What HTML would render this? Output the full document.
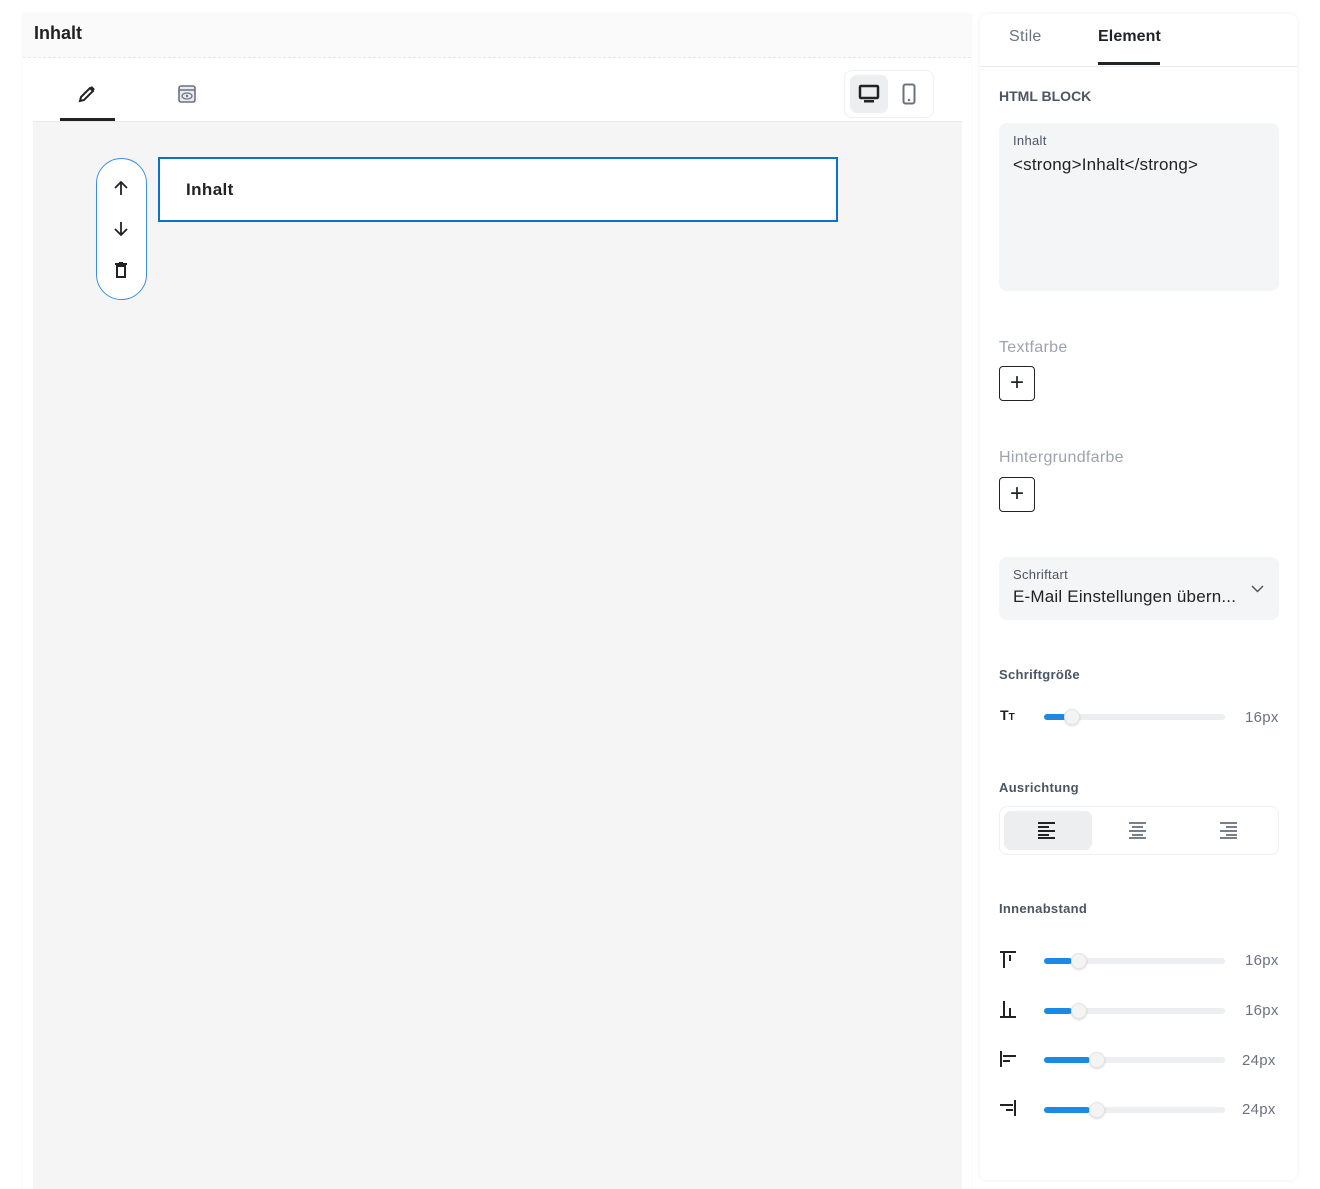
<!DOCTYPE html>
<html><head><meta charset="utf-8"><style>
*{box-sizing:border-box;margin:0;padding:0}
body{width:1320px;height:1189px;background:#fff;font-family:"Liberation Sans",sans-serif;position:relative;overflow:hidden;color:#1f2328}
.a{position:absolute}
.lbl{color:#4b5563;font-size:13px;font-weight:bold;letter-spacing:.3px}
.val{color:#6b7280;font-size:15px;letter-spacing:.3px}
.track{position:absolute;left:1044px;width:181px;height:6px;border-radius:3px;background:#eceef1}
.fill{position:absolute;left:0;top:0;height:6px;border-radius:3px;background:#1a8ae6}
.knob{position:absolute;top:-5px;width:16px;height:16px;border-radius:50%;background:#f4f4f4;border:1px solid #e3e3e3;box-shadow:0 1px 2px rgba(0,0,0,.15)}
.plus{position:absolute;left:999px;width:36px;height:35px;border:1.5px solid #222;border-radius:4px;font-size:24px;line-height:31px;text-align:center;font-weight:300}
</style></head><body>
<div class="a" style="left:23px;top:14px;width:948px;height:1175px;background:#fff;box-shadow:0 0 3px rgba(0,0,0,.06)"></div>
<div class="a" style="left:23px;top:14px;width:948px;height:44px;background:#fafafa;border-bottom:1px dashed #e5e5e5"></div>
<div class="a" style="left:34px;top:23px;font-size:18px;font-weight:bold;color:#222">Inhalt</div>
<svg class="a" style="left:77px;top:84px" width="20" height="20" viewBox="0 0 20 20"><path d="M3 17l1-4L13 4l3 3-9 9z" fill="none" stroke="#222" stroke-width="2"/><path d="M14 3l3 3" stroke="#222" stroke-width="2.5"/></svg>
<div class="a" style="left:60px;top:118px;width:55px;height:3px;background:#222"></div>
<svg class="a" style="left:178px;top:85px" width="18" height="18" viewBox="0 0 18 18"><rect x="1" y="1" width="16" height="16" rx="2" fill="#e8ecef" stroke="#6b7280" stroke-width="1.6"/><line x1="1" y1="5" x2="17" y2="5" stroke="#6b7280" stroke-width="1.5"/><ellipse cx="9" cy="11" rx="5" ry="3" fill="none" stroke="#6b7280" stroke-width="1.3"/><circle cx="9" cy="11" r="1.2" fill="#6b7280"/></svg>
<div class="a" style="left:844px;top:70px;width:90px;height:48px;border:1px solid #f0f0f0;border-radius:8px"></div>
<div class="a" style="left:850px;top:75px;width:38px;height:38px;border-radius:7px;background:#eceef0"></div>
<svg class="a" style="left:858px;top:84px" width="22" height="20" viewBox="0 0 22 20"><rect x="2" y="2" width="18" height="12" rx="1" fill="none" stroke="#222" stroke-width="2.5"/><rect x="6" y="16" width="10" height="2.5" fill="#222"/></svg>
<svg class="a" style="left:902px;top:83px" width="14" height="22" viewBox="0 0 14 22"><rect x="1.5" y="1.5" width="11" height="19" rx="2" fill="none" stroke="#6b7280" stroke-width="2"/><circle cx="7" cy="17" r="1.2" fill="#6b7280"/></svg>
<div class="a" style="left:33px;top:121px;width:929px;height:1px;background:#e8e8e8"></div>
<div class="a" style="left:33px;top:122px;width:929px;height:1067px;background:#f5f5f5"></div>
<div class="a" style="left:96px;top:158px;width:51px;height:142px;border:1.5px solid #3d8fe6;border-radius:26px;background:#fff"></div>
<svg class="a" style="left:112px;top:179px" width="18" height="18" viewBox="0 0 18 18"><path d="M9 16V3M3 9l6-6 6 6" fill="none" stroke="#222" stroke-width="1.8"/></svg>
<svg class="a" style="left:112px;top:220px" width="18" height="18" viewBox="0 0 18 18"><path d="M9 2v13M3 9l6 6 6-6" fill="none" stroke="#222" stroke-width="1.8"/></svg>
<svg class="a" style="left:113px;top:261px" width="16" height="18" viewBox="0 0 16 18"><path d="M2 3h12M6 2h4" stroke="#222" stroke-width="2"/><rect x="4" y="5" width="8" height="11" fill="none" stroke="#222" stroke-width="2"/></svg>
<div class="a" style="left:158px;top:157px;width:680px;height:65px;border:2px solid #0a72c9;background:#fff"></div>
<div class="a" style="left:186px;top:180px;font-size:17px;font-weight:bold;color:#222;letter-spacing:.4px">Inhalt</div>
<div class="a" style="left:980px;top:14px;width:317px;height:1166px;background:#fff;border-radius:8px;box-shadow:0 0 6px rgba(0,0,0,.07)"></div>
<div class="a" style="left:980px;top:66px;width:317px;height:1px;background:#e8eaec"></div>
<div class="a" style="left:1009px;top:28px;font-size:16px;color:#6b7280;letter-spacing:.3px">Stile</div>
<div class="a" style="left:1098px;top:28px;font-size:16px;font-weight:bold;color:#1f2328;letter-spacing:.1px">Element</div>
<div class="a" style="left:1098px;top:62px;width:62px;height:3px;background:#1f2328"></div>
<div class="a lbl" style="left:999px;top:88px;font-size:14px;letter-spacing:0">HTML BLOCK</div>
<div class="a" style="left:999px;top:123px;width:280px;height:168px;background:#f4f5f7;border-radius:8px"></div>
<div class="a" style="left:1013px;top:133px;font-size:13px;color:#4b5563;letter-spacing:.3px">Inhalt</div>
<div class="a" style="left:1013px;top:155px;font-size:17px;color:#222;letter-spacing:.2px">&lt;strong&gt;Inhalt&lt;/strong&gt;</div>
<div class="a" style="left:999px;top:339px;font-size:16px;color:#9ca3af;letter-spacing:.3px">Textfarbe</div>
<div class="plus" style="top:366px">+</div>
<div class="a" style="left:999px;top:449px;font-size:16px;color:#9ca3af;letter-spacing:.3px">Hintergrundfarbe</div>
<div class="plus" style="top:477px">+</div>
<div class="a" style="left:999px;top:557px;width:280px;height:63px;background:#f4f5f7;border-radius:8px"></div>
<div class="a" style="left:1013px;top:567px;font-size:13px;color:#4b5563;letter-spacing:.3px">Schriftart</div>
<div class="a" style="left:1013px;top:587px;font-size:17px;color:#222;letter-spacing:.2px">E-Mail Einstellungen übern...</div>
<svg class="a" style="left:1251px;top:585px" width="13" height="8" viewBox="0 0 13 8"><path d="M1 1l5.5 5.5L12 1" fill="none" stroke="#555" stroke-width="1.5"/></svg>
<div class="a lbl" style="left:999px;top:667px">Schriftgröße</div>
<div class="a" style="left:1000px;top:707px;font-size:14px;font-weight:bold">T<span style="font-size:10px">T</span></div>
<div class="track" style="top:714px"><div class="fill" style="width:22px"></div><div class="knob" style="left:20px"></div></div>
<div class="a val" style="left:1245px;top:709px">16px</div>
<div class="a lbl" style="left:999px;top:780px">Ausrichtung</div>
<div class="a" style="left:999px;top:806px;width:280px;height:49px;border:1px solid #f0f0f0;border-radius:8px"></div>
<div class="a" style="left:1004px;top:811px;width:88px;height:39px;background:#eceef0;border-radius:7px"></div>
<svg class="a" style="left:1038px;top:821px" width="18" height="18" viewBox="0 0 18 18" stroke="#222" stroke-width="2"><path d="M0 2h17M0 6h11M0 10h17M0 14h11M0 17h17"/></svg>
<svg class="a" style="left:1129px;top:821px" width="18" height="18" viewBox="0 0 18 18" stroke="#4b5563" stroke-width="1.6"><path d="M0 2h17M3 6h11M0 10h17M3 14h11M0 17h17"/></svg>
<svg class="a" style="left:1220px;top:821px" width="18" height="18" viewBox="0 0 18 18" stroke="#4b5563" stroke-width="1.6"><path d="M0 2h17M6 6h11M0 10h17M6 14h11M0 17h17"/></svg>
<div class="a lbl" style="left:999px;top:901px">Innenabstand</div>
<svg class="a" style="left:1000px;top:951px" width="16" height="18" viewBox="0 0 16 18" stroke="#222" stroke-width="2"><path d="M0 1h16M4 1v16M10 4v6"/></svg>
<svg class="a" style="left:1000px;top:1001px" width="16" height="18" viewBox="0 0 16 18" stroke="#222" stroke-width="2"><path d="M0 16h16M4 0v15M10 7v8"/></svg>
<svg class="a" style="left:1000px;top:1051px" width="16" height="16" viewBox="0 0 16 16" stroke="#222" stroke-width="2"><path d="M1 0v16M3 5h13M3 10h7"/></svg>
<svg class="a" style="left:1000px;top:1100px" width="16" height="16" viewBox="0 0 16 16" stroke="#222" stroke-width="2"><path d="M15 0v16M0 5h13M6 10h7"/></svg>
<div class="track" style="top:958px"><div class="fill" style="width:28px"></div><div class="knob" style="left:27px"></div></div>
<div class="track" style="top:1008px"><div class="fill" style="width:28px"></div><div class="knob" style="left:27px"></div></div>
<div class="track" style="top:1057px"><div class="fill" style="width:46px"></div><div class="knob" style="left:45px"></div></div>
<div class="track" style="top:1107px"><div class="fill" style="width:46px"></div><div class="knob" style="left:45px"></div></div>
<div class="a val" style="left:1245px;top:952px">16px</div>
<div class="a val" style="left:1245px;top:1002px">16px</div>
<div class="a val" style="left:1242px;top:1052px">24px</div>
<div class="a val" style="left:1242px;top:1101px">24px</div>
</body></html>
